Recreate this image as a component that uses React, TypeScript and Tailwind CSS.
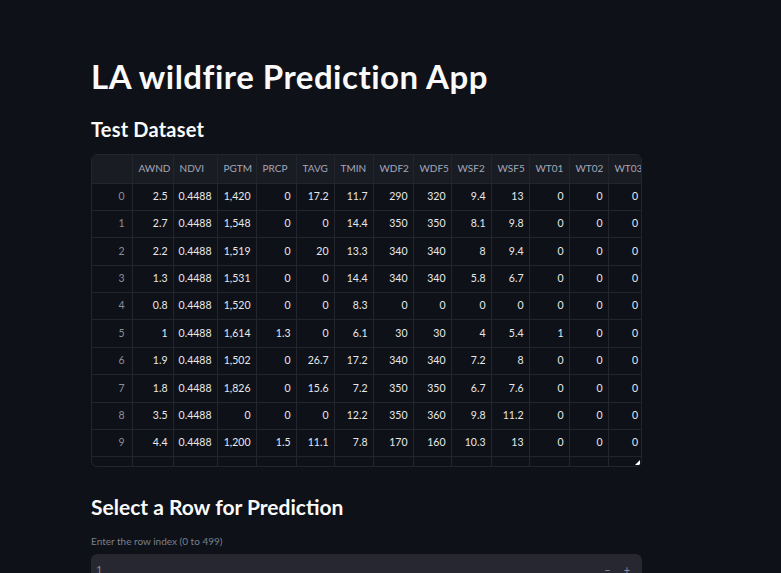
const columns = ["AWND", "NDVI", "PGTM", "PRCP", "TAVG", "TMIN", "WDF2", "WDF5", "WSF2", "WSF5", "WT01", "WT02", "WT03"]

const widths = ["w-[41px]", "w-[44px]", "w-[39px]", "w-[40px]", "w-[38px]", "w-[39px]", "w-[40px]", "w-[38px]", "w-[40px]", "w-[38px]", "w-[40px]", "w-[39px]", "w-[35px]"]

const rows: string[][] = [
  ["2.5", "0.4488", "1,420", "0", "17.2", "11.7", "290", "320", "9.4", "13", "0", "0", "0"],
  ["2.7", "0.4488", "1,548", "0", "0", "14.4", "350", "350", "8.1", "9.8", "0", "0", "0"],
  ["2.2", "0.4488", "1,519", "0", "20", "13.3", "340", "340", "8", "9.4", "0", "0", "0"],
  ["1.3", "0.4488", "1,531", "0", "0", "14.4", "340", "340", "5.8", "6.7", "0", "0", "0"],
  ["0.8", "0.4488", "1,520", "0", "0", "8.3", "0", "0", "0", "0", "0", "0", "0"],
  ["1", "0.4488", "1,614", "1.3", "0", "6.1", "30", "30", "4", "5.4", "1", "0", "0"],
  ["1.9", "0.4488", "1,502", "0", "26.7", "17.2", "340", "340", "7.2", "8", "0", "0", "0"],
  ["1.8", "0.4488", "1,826", "0", "15.6", "7.2", "350", "350", "6.7", "7.6", "0", "0", "0"],
  ["3.5", "0.4488", "0", "0", "0", "12.2", "350", "360", "9.8", "11.2", "0", "0", "0"],
  ["4.4", "0.4488", "1,200", "1.5", "11.1", "7.8", "170", "160", "10.3", "13", "0", "0", "0"]
]

const App = () => {
  return (
    <main
      className="min-h-[573px] w-full overflow-hidden bg-[#0e1117] text-[#fafafa]"
      style={{ fontFamily: "Lato, 'Noto Sans', sans-serif" }}
    >
      <div className="ml-[91px] w-[551px] pt-[55px]">
        <h1 className="text-[33px] font-bold leading-[42px] tracking-[0.5px]">
          LA wildfire Prediction App
        </h1>
        <h2 className="mt-[20px] text-[20px] font-bold leading-[24px] tracking-[0.2px]">
          Test Dataset
        </h2>

        <div className="relative mt-[13px] h-[313px] overflow-hidden rounded-[6px] border border-[#23252d]">
          <table className="w-[551px] table-fixed border-collapse text-[10.5px]">
            <colgroup>
              <col className="w-[40px]" />
              {widths.map((w, i) => (
                <col key={i} className={w} />
              ))}
            </colgroup>
            <thead>
              <tr className="h-[28px] bg-[#1a1c24] text-[10px] text-[#a3a8b8]">
                <th className="border-r border-b border-[#23252d]"></th>
                {columns.map((col) => (
                  <th
                    key={col}
                    className="whitespace-nowrap border-r border-b border-[#23252d] pl-[6px] text-left font-normal last:border-r-0"
                  >
                    {col}
                  </th>
                ))}
              </tr>
            </thead>
            <tbody>
              {rows.map((row, r) => (
                <tr key={r} className="h-[27.4px]">
                  <td className="border-r border-b border-[#23252d] pr-[7px] text-right text-[#8b8f9c]">
                    {r}
                  </td>
                  {row.map((v, i) => (
                    <td
                      key={i}
                      className="whitespace-nowrap border-r border-b border-[#23252d] pr-[5px] text-right text-[#e8e9ec] last:border-r-0"
                    >
                      {v}
                    </td>
                  ))}
                </tr>
              ))}
              <tr className="h-[27.4px]">
                <td className="border-r border-[#23252d]"></td>
                {columns.map((col) => (
                  <td key={col} className="border-r border-[#23252d] last:border-r-0"></td>
                ))}
              </tr>
            </tbody>
          </table>
          <svg className="absolute right-[1px] bottom-[1px]" width="5" height="5" viewBox="0 0 5 5">
            <path d="M5 0 L5 5 L0 5 Z" fill="#ffffff" />
          </svg>
        </div>

        <h2 className="mt-[26px] text-[21px] font-bold leading-[28px]">
          Select a Row for Prediction
        </h2>
        <p className="mt-[13px] text-[10px] leading-[14px] text-[#7c808c]">
          Enter the row index (0 to 499)
        </p>
        <div className="mt-[6px] flex h-[32px] items-center rounded-[6px] bg-[#262730] pl-[5px] pr-[8px] text-[11px]">
          <span className="flex-1 text-[#8b8f9c]">1</span>
          <span className="w-[25px] text-center text-[#8b8f9c]">−</span>
          <span className="w-[14px] text-center text-[#8b8f9c]">+</span>
        </div>
      </div>
    </main>
  )
}

export default App
